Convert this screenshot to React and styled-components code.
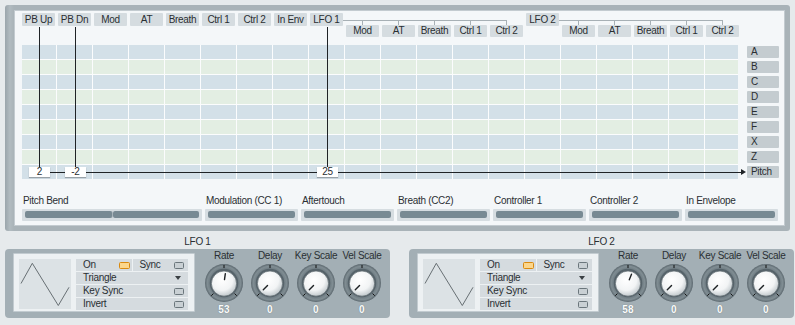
import React from 'react';
import styled, { createGlobalStyle } from 'styled-components';

const GlobalStyle = createGlobalStyle`
  html, body { margin: 0; padding: 0; }
  body {
    background: #e6eaec;
    font-family: "Liberation Sans", Arial, sans-serif;
    font-size: 10px;
    letter-spacing: -0.3px;
    color: #2a2f33;
    overflow: hidden;
  }
`;

const Page = styled.div`
  width: 795px;
  height: 325px;
  padding-top: 5px;
  box-sizing: border-box;
  background: #e6eaec;
`;

const Frame = styled.div`
  margin: 0 5px;
  padding: 5px 5px 5px 9px;
  border-radius: 3px;
  background: linear-gradient(90deg, #9aa5ab 0, #b1bbc0 5px, #a9b3b8 9px, #a9b3b8 100%);
`;

const Panel = styled.div`
  position: relative;
  height: 216px;
  box-sizing: border-box;
  background: #f4f7f9;
  border: 1px solid #c3cbd0;
  padding: 2px 0 0 7px;
`;

const Header = styled.div`
  display: grid;
  grid-template-columns: repeat(20, 33px);
  grid-template-rows: 12px 13px;
  column-gap: 3px;
`;

const Tag = styled.div`
  grid-column: ${p => p.col};
  grid-row: ${p => p.row};
  height: ${p => (p.row === 1 ? 13 : 12)}px;
  line-height: ${p => (p.row === 1 ? 13 : 12)}px;
  background: #d5dce0;
  border-radius: 1px;
  text-align: center;
  white-space: nowrap;
`;

const Bracket = styled.div`
  grid-column: ${p => p.from} / ${p => p.from + 5};
  grid-row: 1;
  align-self: start;
  margin: 7px 16px 0 -3px;
  height: 5px;
  border-top: 1px solid #a7b0b5;
  display: flex;
  justify-content: space-between;
  padding-left: 19px;
`;

const Tick = styled.span`
  width: 1px;
  height: 5px;
  background: #a7b0b5;
`;

const MatrixArea = styled.div`
  display: flex;
  margin-top: 7px;
`;

const Matrix = styled.div`
  display: grid;
  grid-template-columns: 34px repeat(18, 35px) 33px;
  grid-auto-rows: 14px;
  gap: 1px;
  background: #fbfcfd;
`;

const Cell = styled.div`
  background: ${p => (p.alt ? '#e3eee3' : '#d3e0e8')};
`;

const Targets = styled.div`
  display: flex;
  flex-direction: column;
  gap: 3px;
  margin-left: 9px;
  padding-top: 1px;
`;

const Target = styled.div`
  width: 32px;
  height: 12px;
  line-height: 12px;
  padding-left: 4px;
  box-sizing: border-box;
  background: #c4ccd0;
  border-radius: 1px;
`;

const WireV = styled.div`
  position: absolute;
  top: 16px;
  width: 1px;
  height: 145px;
  background: #1f2326;
`;

const WireH = styled.div`
  position: absolute;
  top: 161px;
  left: 35px;
  width: 692px;
  height: 1px;
  background: #1f2326;
`;

const Arrow = styled.div`
  position: absolute;
  top: 158px;
  left: 726px;
  border-left: 5px solid #1f2326;
  border-top: 3.5px solid transparent;
  border-bottom: 3.5px solid transparent;
`;

const Amount = styled.div`
  position: absolute;
  top: 156px;
  width: 21px;
  height: 10px;
  line-height: 10px;
  margin-left: -10px;
  text-align: center;
  background: #fff;
  box-shadow: 0 1px 1px rgba(0, 0, 0, 0.28);
`;

const Sources = styled.div`
  display: grid;
  grid-template-columns: 180px repeat(6, 1fr);
  column-gap: 3px;
  width: 756px;
  margin-top: 16px;
`;

const Source = styled.div`
  display: flex;
  flex-direction: column;
`;

const SourceLabel = styled.div`
  line-height: 12px;
  padding-left: 1px;
  white-space: nowrap;
`;

const Bar = styled.div`
  display: flex;
  gap: 1px;
  height: 12px;
  margin-top: 2px;
  padding: 2px 3px 3px;
  box-sizing: border-box;
  background: #d6dde1;
  border-radius: 1px;
`;

const BarFill = styled.div`
  flex: 1;
  background: #788a93;
  border-radius: 2px;
  box-shadow: ${p => (p.split ? '1px 0 0 #a8b4ba' : 'none')};
`;

const LfoRow = styled.div`
  display: flex;
  gap: 19px;
  margin: 4px 0 0 5px;
`;

const LfoBlock = styled.div`
  width: 385px;
`;

const LfoTitle = styled.div`
  height: 13px;
  line-height: 13px;
  text-align: center;
`;

const LfoPanel = styled.div`
  display: flex;
  height: 69px;
  margin-top: 1px;
  padding: 4px 5px 0 8px;
  box-sizing: border-box;
  background: #a3afb5;
  border-radius: 4px;
`;

const Inset = styled.div`
  display: flex;
  gap: 5px;
  width: 182px;
  height: 59px;
  padding: 5px 6px 1px 5px;
  box-sizing: border-box;
  background: #edf1f3;
  border: 1px solid #c2cbd0;
  border-radius: 1px;
`;

const WaveBox = styled.div`
  width: 52px;
  height: 50px;
  background: #dce2e5;
`;

const Options = styled.div`
  flex: 1;
  display: flex;
  flex-direction: column;
  gap: 1px;
`;

const OptionPair = styled.div`
  display: grid;
  grid-template-columns: 1fr 1fr;
  gap: 1px;
`;

const Option = styled.div`
  display: flex;
  align-items: center;
  justify-content: space-between;
  height: 12px;
  line-height: 12px;
  padding: 0 ${p => (p.tight ? 2 : 4)}px 0 7px;
  background: #d5dbdf;
`;

const Led = styled.span`
  width: ${p => (p.on ? 11 : 10)}px;
  height: 7px;
  box-sizing: border-box;
  border-radius: 1.5px;
  background: ${p => (p.on ? '#fcd68b' : '#c9d0d4')};
  border: 1px solid ${p => (p.on ? '#d9890f' : '#6b767c')};
`;

const DropArrow = styled.span`
  margin-right: 3px;
  border-top: 4px solid #3a4044;
  border-left: 3.5px solid transparent;
  border-right: 3.5px solid transparent;
`;

const Knobs = styled.div`
  display: grid;
  grid-template-columns: repeat(4, 46px);
  margin-left: 6px;
  margin-top: -3px;
`;

const KnobCol = styled.div`
  display: flex;
  flex-direction: column;
  align-items: center;
`;

const KnobLabel = styled.div`
  line-height: 12px;
  white-space: nowrap;
`;

const KnobValue = styled.div`
  line-height: 12px;
  margin-top: 1px;
  color: #fbfcfc;
  font-weight: bold;
  letter-spacing: 0.2px;
  text-shadow: 0 0 1px rgba(60, 70, 76, 0.6);
`;

const KnobSvg = styled.svg`
  display: block;
  margin-top: 1px;
`;

const headerTop = ['PB Up', 'PB Dn', 'Mod', 'AT', 'Breath', 'Ctrl 1', 'Ctrl 2', 'In Env', 'LFO 1'];
const subSources = ['Mod', 'AT', 'Breath', 'Ctrl 1', 'Ctrl 2'];
const targets = ['A', 'B', 'C', 'D', 'E', 'F', 'X', 'Z', 'Pitch'];
const wires = [
  { col: 0, value: '2' },
  { col: 1, value: '-2' },
  { col: 8, value: '25' }
];
const sources = ['Pitch Bend', 'Modulation (CC 1)', 'Aftertouch', 'Breath (CC2)', 'Controller 1', 'Controller 2', 'In Envelope'];

const Knob = ({ value }) => {
  const angle = -135 + (value / 100) * 270;
  const rad = (angle * Math.PI) / 180;
  const sx = 20 + Math.sin(rad) * 3.5;
  const sy = 20 - Math.cos(rad) * 3.5;
  const ex = 20 + Math.sin(rad) * 9.5;
  const ey = 20 - Math.cos(rad) * 9.5;
  const tick = a => {
    const r = (a * Math.PI) / 180;
    return {
      x1: 20 + Math.sin(r) * 15,
      y1: 20 - Math.cos(r) * 15,
      x2: 20 + Math.sin(r) * 18,
      y2: 20 - Math.cos(r) * 18
    };
  };
  return (
    <KnobSvg width="40" height="40" viewBox="0 0 40 40">
      <defs>
        <radialGradient id="ring" cx="50%" cy="50%" r="50%">
          <stop offset="70%" stopColor="#6a777e" />
          <stop offset="88%" stopColor="#808d93" />
          <stop offset="100%" stopColor="#5b676e" />
        </radialGradient>
        <radialGradient id="cap" cx="42%" cy="35%" r="70%">
          <stop offset="0%" stopColor="#ffffff" />
          <stop offset="60%" stopColor="#f2f4f5" />
          <stop offset="100%" stopColor="#b9c1c5" />
        </radialGradient>
      </defs>
      <circle cx="20" cy="20" r="19" fill="url(#ring)" />
      <circle cx="20" cy="20" r="14.2" fill="#56636a" />
      {[-135, 0, 135].map(a => (
        <line key={a} {...tick(a)} stroke="#111" strokeWidth="1" />
      ))}
      <circle cx="20" cy="20.6" r="12.6" fill="url(#cap)" stroke="#5d686e" strokeWidth="0.7" />
      <line x1={sx} y1={sy} x2={ex} y2={ey} stroke="#1d2124" strokeWidth="1.4" strokeLinecap="round" />
    </KnobSvg>
  );
};

const Lfo = ({ title, rate }) => (
  <LfoBlock>
    <LfoTitle>{title}</LfoTitle>
    <LfoPanel>
      <Inset>
        <WaveBox>
          <svg width="52" height="50" viewBox="0 0 52 50">
            <polyline
              points="2,24.5 13.3,4.3 39.3,46.5 50,28.3"
              fill="none"
              stroke="#5a6266"
              strokeWidth="0.9"
            />
          </svg>
        </WaveBox>
        <Options>
          <OptionPair>
            <Option tight>
              On <Led on />
            </Option>
            <Option>
              Sync <Led />
            </Option>
          </OptionPair>
          <Option>
            Triangle <DropArrow />
          </Option>
          <Option>
            Key Sync <Led />
          </Option>
          <Option>
            Invert <Led />
          </Option>
        </Options>
      </Inset>
      <Knobs>
        {[
          ['Rate', rate],
          ['Delay', 0],
          ['Key Scale', 0],
          ['Vel Scale', 0]
        ].map(([label, v]) => (
          <KnobCol key={label}>
            <KnobLabel>{label}</KnobLabel>
            <Knob value={v} />
            <KnobValue>{v}</KnobValue>
          </KnobCol>
        ))}
      </Knobs>
    </LfoPanel>
  </LfoBlock>
);

export default function App() {
  return (
    <Page>
      <GlobalStyle />
      <Frame>
        <Panel>
          <Header>
            {headerTop.map((t, i) => (
              <Tag key={t} col={i + 1} row={1}>
                {t}
              </Tag>
            ))}
            <Bracket from={10}>
              {subSources.map(s => (
                <Tick key={s} />
              ))}
            </Bracket>
            <Tag col={15} row={1}>
              LFO 2
            </Tag>
            <Bracket from={16}>
              {subSources.map(s => (
                <Tick key={s} />
              ))}
            </Bracket>
            {subSources.map((t, i) => (
              <Tag key={'a' + t} col={10 + i} row={2}>
                {t}
              </Tag>
            ))}
            {subSources.map((t, i) => (
              <Tag key={'b' + t} col={16 + i} row={2}>
                {t}
              </Tag>
            ))}
          </Header>
          <MatrixArea>
            <Matrix>
              {targets.map((t, r) =>
                Array.from({ length: 20 }, (_, c) => <Cell key={t + c} alt={r % 2 === 1} />)
              )}
            </Matrix>
            <Targets>
              {targets.map(t => (
                <Target key={t}>{t}</Target>
              ))}
            </Targets>
          </MatrixArea>
          <Sources>
            {sources.map((s, i) => (
              <Source key={s}>
                <SourceLabel>{s}</SourceLabel>
                <Bar>
                  <BarFill split={i === 0} />
                  {i === 0 && <BarFill />}
                </Bar>
              </Source>
            ))}
          </Sources>
          <WireH />
          <Arrow />
          {wires.map(w => (
            <WireV key={w.col} style={{ left: 24 + w.col * 36 }} />
          ))}
          {wires.map(w => (
            <Amount key={w.col} style={{ left: 24 + w.col * 36 }}>
              {w.value}
            </Amount>
          ))}
        </Panel>
      </Frame>
      <LfoRow>
        <Lfo title="LFO 1" rate={53} />
        <Lfo title="LFO 2" rate={58} />
      </LfoRow>
    </Page>
  );
}
